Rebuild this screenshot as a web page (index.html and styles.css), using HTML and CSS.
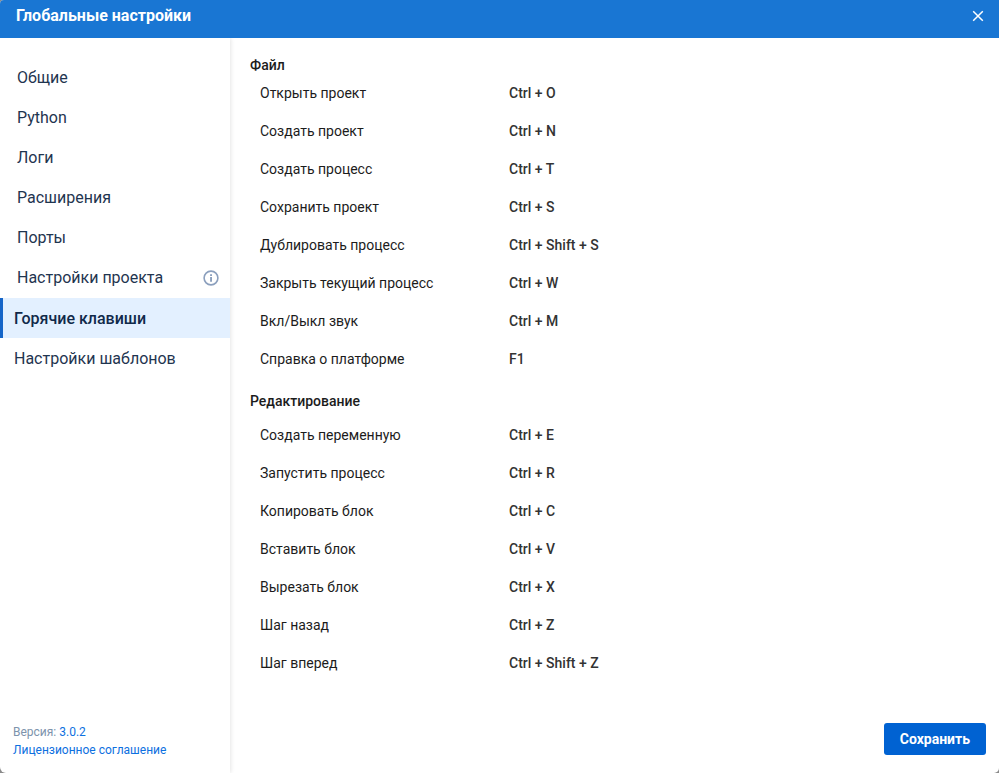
FILE: index.html
```html
<!DOCTYPE html>
<html lang="ru">
<head>
<meta charset="utf-8">
<meta name="viewport" content="width=device-width, initial-scale=1">
<title>Глобальные настройки</title>
<link rel="stylesheet" href="styles.css">
</head>
<body>
<div class="dialog">
  <header class="header">
    <h1 class="title">Глобальные настройки</h1>
    <button class="close" type="button" aria-label="Закрыть">
      <svg width="12" height="12" viewBox="0 0 12 12" aria-hidden="true"><path d="M1.2 1.2 10.8 10.8M10.8 1.2 1.2 10.8" fill="none" stroke="currentColor" stroke-width="1.5"/></svg>
    </button>
  </header>
  <div class="body">
    <aside class="sidebar">
      <nav class="nav">
        <a class="item" href="#general">Общие</a>
        <a class="item" href="#python">Python</a>
        <a class="item" href="#logs">Логи</a>
        <a class="item" href="#extensions">Расширения</a>
        <a class="item" href="#ports">Порты</a>
        <a class="item" href="#project">Настройки проекта
          <svg class="info" width="16" height="16" viewBox="0 0 16 16" aria-hidden="true"><circle cx="8" cy="8" r="6.9" fill="none" stroke="currentColor" stroke-width="1.6"/><path d="M7.1 4.2h1.9v1.8H7.1zM7.1 7h1.9v4.7H7.1z" fill="currentColor"/></svg>
        </a>
        <a class="item item-app item-active" href="#hotkeys" aria-current="page">Горячие клавиши</a>
        <a class="item item-app" href="#templates">Настройки шаблонов</a>
      </nav>
      <div class="about">
        <div>Версия: <a href="#version">3.0.2</a></div>
        <div><a href="#license">Лицензионное соглашение</a></div>
      </div>
    </aside>
    <main class="content">
      <section class="group">
        <h2 class="group-title">Файл</h2>
        <table class="keys">
          <tr><th scope="row">Открыть проект</th><td>Ctrl + O</td></tr>
          <tr><th scope="row">Создать проект</th><td>Ctrl + N</td></tr>
          <tr><th scope="row">Создать процесс</th><td>Ctrl + T</td></tr>
          <tr><th scope="row">Сохранить проект</th><td>Ctrl + S</td></tr>
          <tr><th scope="row">Дублировать процесс</th><td>Ctrl + Shift + S</td></tr>
          <tr><th scope="row">Закрыть текущий процесс</th><td>Ctrl + W</td></tr>
          <tr><th scope="row">Вкл/Выкл звук</th><td>Ctrl + M</td></tr>
          <tr><th scope="row">Справка о платформе</th><td>F1</td></tr>
        </table>
      </section>
      <section class="group group-spaced">
        <h2 class="group-title">Редактирование</h2>
        <table class="keys">
          <tr><th scope="row">Создать переменную</th><td>Ctrl + E</td></tr>
          <tr><th scope="row">Запустить процесс</th><td>Ctrl + R</td></tr>
          <tr><th scope="row">Копировать блок</th><td>Ctrl + C</td></tr>
          <tr><th scope="row">Вставить блок</th><td>Ctrl + V</td></tr>
          <tr><th scope="row">Вырезать блок</th><td>Ctrl + X</td></tr>
          <tr><th scope="row">Шаг назад</th><td>Ctrl + Z</td></tr>
          <tr><th scope="row">Шаг вперед</th><td>Ctrl + Shift + Z</td></tr>
        </table>
      </section>
      <footer class="actions">
        <button class="save" type="button">Сохранить</button>
      </footer>
    </main>
  </div>
</div>
</body>
</html>
```
FILE: styles.css
```css
* {
  box-sizing: border-box;
}

body {
  margin: 0;
  background: #8a8a8a;
  color: #1c1c1c;
  font: 14px/18px Roboto, "Liberation Sans", sans-serif;
}

a {
  color: #0d70e0;
  text-decoration: none;
}

.dialog {
  display: flex;
  flex-direction: column;
  min-height: 100vh;
  background: #fff;
  border-radius: 4px 0 5px 6px;
  overflow: hidden;
}

.header {
  display: flex;
  align-items: center;
  justify-content: space-between;
  height: 38px;
  padding: 0 11px 6px 16px;
  background: #1976d3;
  color: #fff;
}

.title {
  margin: 0;
  font-size: 16px;
  font-weight: 700;
  line-height: 20px;
}

.close {
  display: flex;
  padding: 4px;
  border: 0;
  background: none;
  color: inherit;
  cursor: pointer;
}

.body {
  display: flex;
  flex: 1;
  overflow: hidden;
}

.sidebar {
  display: flex;
  flex: none;
  flex-direction: column;
  justify-content: space-between;
  width: 230px;
  padding: 20px 0 14px;
  box-shadow: 1px 0 4px rgba(0, 0, 0, 0.1);
}

.nav {
  display: flex;
  flex-direction: column;
}

.item {
  display: flex;
  align-items: center;
  justify-content: space-between;
  height: 40px;
  padding: 0 11px 0 17px;
  color: #1f3550;
  font-size: 16px;
  line-height: 20px;
}

.item-app {
  padding-top: 1px;
  padding-left: 11px;
  border-left: 3px solid transparent;
}

.item-active {
  border-left-color: #1565c8;
  background: #e3f0ff;
  color: #10294a;
  font-weight: 500;
}

.info {
  color: #8b9fbd;
}

.about {
  padding-left: 13px;
  color: #7d93ac;
  font-size: 12px;
}

.content {
  display: flex;
  flex: 1;
  flex-direction: column;
  padding: 18px 13px 18px 20px;
}

.group-title {
  margin: 0;
  font-size: 14px;
  font-weight: 500;
  line-height: 18px;
}

.group-spaced {
  padding-top: 14px;
}

.group-spaced .group-title {
  padding-bottom: 6px;
}

.keys {
  width: 100%;
  border-collapse: collapse;
  table-layout: fixed;
}

.keys th,
.keys td {
  height: 38px;
  padding: 0 0 0 10px;
  font-weight: 400;
  text-align: left;
}

.keys th {
  width: 249px;
}

.keys td {
  color: #333;
  font-weight: 500;
}

.actions {
  display: flex;
  justify-content: flex-end;
  margin-top: auto;
}

.save {
  height: 32px;
  padding: 0 16px 1px;
  border: 0;
  border-radius: 3px;
  background: #0062d2;
  color: #fff;
  font: 700 14px/18px Roboto, "Liberation Sans", sans-serif;
  cursor: pointer;
}
```
